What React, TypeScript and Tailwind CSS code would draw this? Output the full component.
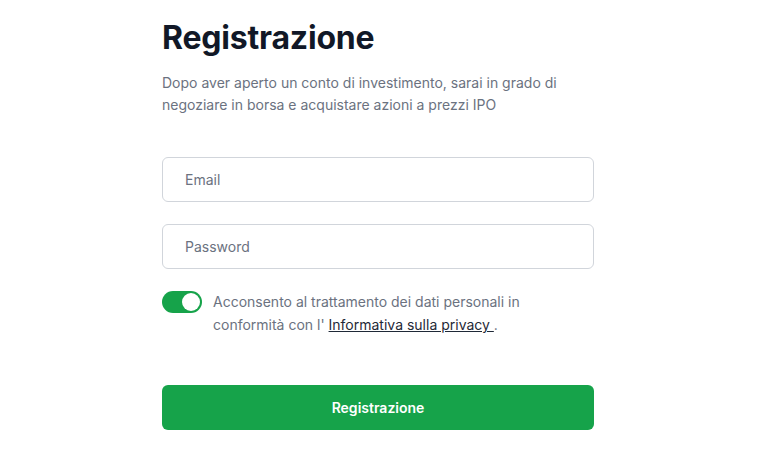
import { useState } from 'react';

export default function App() {
    const [consent, setConsent] = useState(true);

    return (
        <div className="min-h-screen bg-white" style={{ fontFamily: 'Inter, "Noto Sans", sans-serif' }}>
            <div className="ml-[162px] w-[432px] pt-[18px]">
                <h1 className="text-[32px] leading-[40px] font-bold text-[#111827] tracking-[-0.2px]">Registrazione</h1>
                <p className="mt-[14px] text-[14px] leading-[22px] text-[#6b7280]">
                    Dopo aver aperto un conto di investimento, sarai in grado di negoziare in borsa e acquistare azioni a prezzi IPO
                </p>

                <div className="mt-[41px] flex flex-col gap-[22px]">
                    <input
                        type="email"
                        placeholder="Email"
                        className="h-[45px] w-full rounded-md border border-[#d1d5db] bg-white px-[22px] text-[14px] text-[#111827] placeholder:text-[#6b7280] outline-none"
                    />
                    <input
                        type="password"
                        placeholder="Password"
                        className="h-[45px] w-full rounded-md border border-[#d1d5db] bg-white px-[22px] text-[14px] text-[#111827] placeholder:text-[#6b7280] outline-none"
                    />
                </div>

                <div className="mt-[21px] flex items-start gap-[11px]">
                    <button
                        type="button"
                        onClick={() => setConsent(!consent)}
                        className={`mt-px flex h-[22px] w-[40px] shrink-0 items-center rounded-full p-[2px] ${consent ? 'justify-end bg-[#16a34a]' : 'justify-start bg-[#d1d5db]'}`}
                    >
                        <span className="h-[18px] w-[18px] rounded-full bg-white" />
                    </button>
                    <p className="text-[14px] leading-[23px] text-[#6b7280]">
                        Acconsento al trattamento dei dati personali in conformità con l'{' '}
                        <a href="#" className="text-[#1f2937] underline">Informativa sulla privacy&nbsp;</a>.
                    </p>
                </div>

                <button
                    type="button"
                    className="mt-[49px] h-[45px] w-full rounded-md bg-[#16a34a] text-[14px] font-semibold text-white"
                >
                    Registrazione
                </button>
            </div>
        </div>
    );
}
